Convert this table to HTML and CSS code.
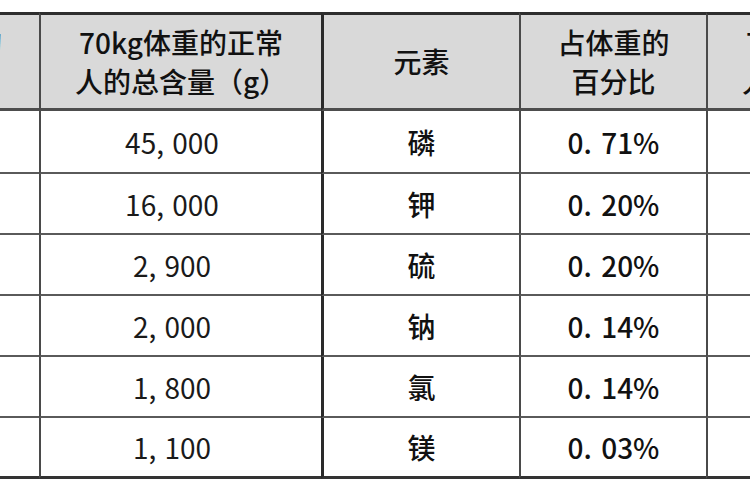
FILE: index.html
```html
<!DOCTYPE html>
<html lang="zh-CN">
<head>
<meta charset="utf-8">
<title>人体元素含量表</title>
<link rel="stylesheet" href="styles.css">
</head>
<body>
<table class="elements">
  <thead>
    <tr>
      <th class="c-a">占体重的<br>百分比</th>
      <th class="c-b">70kg体重的正常<br>人的总含量（g）</th>
      <th class="c-c">元素</th>
      <th class="c-d">占体重的<br>百分比</th>
      <th class="c-e">70kg体重的正常<br>人的总含量（g）</th>
    </tr>
  </thead>
  <tbody>
    <tr class="first">
      <td class="c-a">64. 29%</td>
      <td class="c-b num">45, 000</td>
      <td class="c-c">磷</td>
      <td class="c-d">0. 71%</td>
      <td class="c-e">500</td>
    </tr>
    <tr>
      <td class="c-a">22. 86%</td>
      <td class="c-b num">16, 000</td>
      <td class="c-c">钾</td>
      <td class="c-d">0. 20%</td>
      <td class="c-e">140</td>
    </tr>
    <tr>
      <td class="c-a">4. 14%</td>
      <td class="c-b num">2, 900</td>
      <td class="c-c">硫</td>
      <td class="c-d">0. 20%</td>
      <td class="c-e">140</td>
    </tr>
    <tr>
      <td class="c-a">2. 86%</td>
      <td class="c-b num">2, 000</td>
      <td class="c-c">钠</td>
      <td class="c-d">0. 14%</td>
      <td class="c-e">100</td>
    </tr>
    <tr>
      <td class="c-a">2. 57%</td>
      <td class="c-b num">1, 800</td>
      <td class="c-c">氯</td>
      <td class="c-d">0. 14%</td>
      <td class="c-e">95</td>
    </tr>
    <tr class="last">
      <td class="c-a">1. 57%</td>
      <td class="c-b num">1, 100</td>
      <td class="c-c">镁</td>
      <td class="c-d">0. 03%</td>
      <td class="c-e">19</td>
    </tr>
  </tbody>
</table>
</body>
</html>
```

FILE: styles.css
```css
html, body {
  margin: 0;
  padding: 0;
  background: #ffffff;
  overflow: hidden;
  width: 750px;
  height: 500px;
}

.elements {
  border-collapse: separate;
  border-spacing: 0;
  table-layout: fixed;
  width: 1135px;
  margin: 12px 0 0 -147px;
  font-family: "Noto Sans CJK SC", "Noto Sans", sans-serif;
  font-size: 28px;
  font-weight: 500;
  color: #111111;
}

.elements th,
.elements td {
  box-sizing: border-box;
  padding: 0;
  text-align: center;
  vertical-align: middle;
  white-space: nowrap;
  overflow: hidden;
  border-left: 2px solid #4a4a4a;
}

.elements th {
  background: #d9d9d9;
  font-weight: 500;
  line-height: 39px;
  height: 99px;
  border-top: 3px solid #2e2e2e;
  border-bottom: 3px solid #4d4d4d;
}

.elements td {
  height: 61px;
  line-height: 36px;
  border-bottom: 2px solid #5a5a5a;
}

.elements tr.first td {
  height: 63px;
}

.elements tr.last td {
  border-bottom: 3px solid #333333;
}

.elements .c-a { width: 186px; border-left: none; }
.elements .c-b { width: 282px; }
.elements .c-c { width: 198px; border-left: 3px solid #2a2a2a; }
.elements .c-d { width: 187px; }
.elements .c-e { width: 282px; }

.elements td.num {
  padding-right: 18px;
  word-spacing: 2px;
  font-weight: 400;
  color: #1a1a1a;
}

.elements td.c-d {
  word-spacing: 3px;
}
```
